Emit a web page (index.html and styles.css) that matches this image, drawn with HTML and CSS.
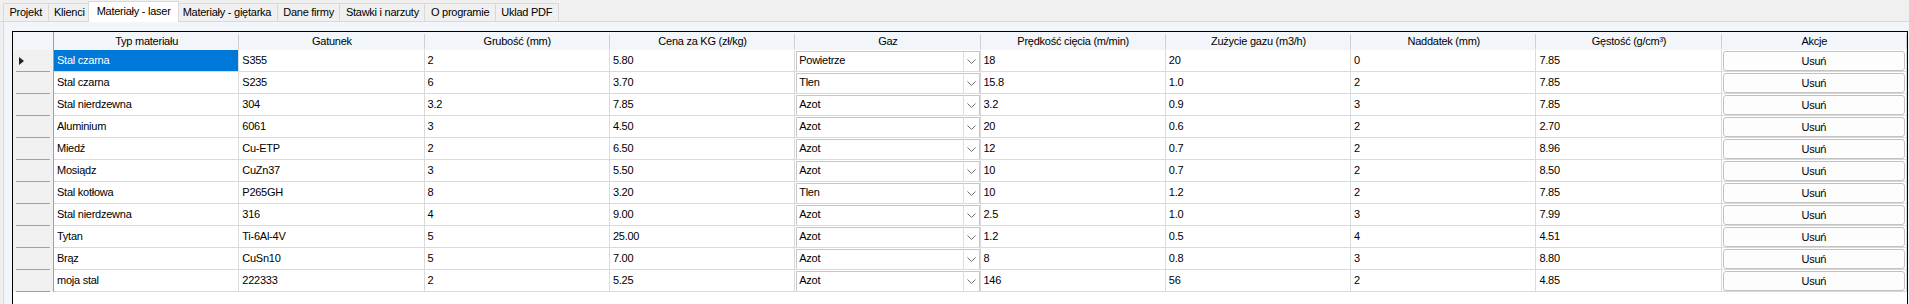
FILE: index.html
```html
<!DOCTYPE html>
<html lang="pl">
<head>
    <meta charset="UTF-8">
    <title>Materiały - laser</title>
    <link rel="stylesheet" href="styles.css">
</head>
<body>
    <div class="tabs">
        <div class="tab">Projekt</div>
        <div class="tab">Klienci</div>
        <div class="tab active">Materiały - laser</div>
        <div class="tab">Materiały - giętarka</div>
        <div class="tab">Dane firmy</div>
        <div class="tab">Stawki i narzuty</div>
        <div class="tab">O programie</div>
        <div class="tab">Uklad PDF</div>
    </div>

    <div class="page">
        <div class="grid" id="grid">
            <div class="grid-row header-row">
                <div class="corner"></div>
                <div class="col-head">Typ materiału</div>
                <div class="col-head">Gatunek</div>
                <div class="col-head">Grubość (mm)</div>
                <div class="col-head">Cena za KG (zł/kg)</div>
                <div class="col-head">Gaz</div>
                <div class="col-head">Prędkość cięcia (m/min)</div>
                <div class="col-head">Zużycie gazu (m3/h)</div>
                <div class="col-head">Naddatek (mm)</div>
                <div class="col-head">Gęstość (g/cm³)</div>
                <div class="col-head">Akcje</div>
            </div>
            <!-- rows are added by the script below -->
        </div>
    </div>

    <script>
        const materials = [
            ['Stal czarna', 'S355', '2', '5.80', 'Powietrze', '18', '20', '0', '7.85'],
            ['Stal czarna', 'S235', '6', '3.70', 'Tlen', '15.8', '1.0', '2', '7.85'],
            ['Stal nierdzewna', '304', '3.2', '7.85', 'Azot', '3.2', '0.9', '3', '7.85'],
            ['Aluminium', '6061', '3', '4.50', 'Azot', '20', '0.6', '2', '2.70'],
            ['Miedź', 'Cu-ETP', '2', '6.50', 'Azot', '12', '0.7', '2', '8.96'],
            ['Mosiądz', 'CuZn37', '3', '5.50', 'Azot', '10', '0.7', '2', '8.50'],
            ['Stal kotłowa', 'P265GH', '8', '3.20', 'Tlen', '10', '1.2', '2', '7.85'],
            ['Stal nierdzewna', '316', '4', '9.00', 'Azot', '2.5', '1.0', '3', '7.99'],
            ['Tytan', 'Ti-6Al-4V', '5', '25.00', 'Azot', '1.2', '0.5', '4', '4.51'],
            ['Brąz', 'CuSn10', '5', '7.00', 'Azot', '8', '0.8', '3', '8.80'],
            ['moja stal', '222333', '2', '5.25', 'Azot', '146', '56', '2', '4.85']
        ];

        const chevron = '<svg width="9" height="5" viewBox="0 0 9 5"><polyline points="0.5,0.5 4.5,4.5 8.5,0.5" fill="none" stroke="#6d6d6d" stroke-width="1"/></svg>';
        const arrow = '<svg width="5" height="8" viewBox="0 0 5 8"><polygon points="0,0 5,4 0,8" fill="#222"/></svg>';

        const grid = document.getElementById('grid');

        materials.forEach((m, i) => {
            const row = document.createElement('div');
            row.className = 'grid-row';
            let html = `<div class="row-head">${i === 0 ? arrow : ''}</div>`;
            m.forEach((value, col) => {
                if (col === 4) {
                    html += `<div class="cell"><div class="combo"><span class="combo-text">${value}</span><span class="combo-btn">${chevron}</span></div></div>`;
                } else {
                    const selected = (i === 0 && col === 0) ? ' selected' : '';
                    html += `<div class="cell${selected}">${value}</div>`;
                }
            });
            html += '<div class="cell"><div class="btn">Usuń</div></div>';
            row.innerHTML = html;
            grid.appendChild(row);
        });
    </script>
</body>
</html>
```

FILE: styles.css
```css
html, body {
    margin: 0;
    height: 100%;
    overflow: hidden;
}
body {
    font-family: "Liberation Sans", Arial, sans-serif;
    font-size: 11px;
    letter-spacing: -0.25px;
    color: #000;
    background: #f0f0f0;
}

/* tab strip */
.tabs {
    display: flex;
    align-items: flex-end;
    height: 22px;
    padding-left: 3px;
    box-sizing: border-box;
    border-bottom: 1px solid #d9d9d9;
}
.tab {
    height: 17px;
    line-height: 17px;
    padding: 0 5.5px;
    border: 1px solid #d9d9d9;
    border-bottom: none;
    border-right: none;
    background: #f0f0f0;
    white-space: nowrap;
}
.tab:last-child {
    border-right: 1px solid #d9d9d9;
}
.tab.active {
    height: 20px;
    line-height: 18px;
    margin: 0 -2px -1px;
    padding: 0 7.5px;
    background: #fff;
    border-right: 1px solid #d9d9d9;
    position: relative;
}
.tab.active + .tab {
    border-left: none;
}

/* tab page */
.page {
    margin-left: 3px;
    height: 100%;
    padding: 9px 1px 0 8px;
    border-left: 1px solid #d9d9d9;
    background: #f2f6fa;
}

/* data grid */
.grid {
    border: 1px solid #000;
    background: #fff;
    height: 320px;
}
.grid-row {
    display: grid;
    grid-template-columns: 41px repeat(10, minmax(0, 1fr));
    height: 22px;
}
.header-row {
    height: 18px;
    background: #f2f6fa;
}
.corner {
    border-right: 1px solid #a0a0a0;
}
.col-head {
    text-align: center;
    line-height: 18px;
    white-space: nowrap;
    overflow: hidden;
    background: linear-gradient(#cfcfcf, #cfcfcf) no-repeat right 0 top 2px / 1px 15px;
}
.row-head {
    border-right: 1px solid #a0a0a0;
    background: linear-gradient(#a0a0a0, #a0a0a0) no-repeat 3px 100% / calc(100% - 6px) 1px, #f0f0f0;
    display: flex;
    align-items: center;
    padding-left: 6px;
}
.cell {
    box-sizing: border-box;
    border-right: 1px solid #dadada;
    border-bottom: 1px solid #dadada;
    padding-left: 3px;
    line-height: 21px;
    white-space: nowrap;
    overflow: hidden;
}
.cell.selected {
    background: #0078d7;
    color: #fff;
}

/* combo box cell */
.combo {
    display: flex;
    height: 19px;
    margin: 1px 0 0 -2px;
    border: 1px solid #c8c8c8;
    border-bottom-color: #a9a9a9;
    background: #fff;
    line-height: 17px;
}
.combo-text {
    flex: 1;
    padding-left: 2px;
}
.combo-btn {
    width: 15px;
    border-left: 1px solid #dedede;
    display: flex;
    align-items: center;
    justify-content: center;
}

/* action button cell */
.btn {
    height: 18px;
    margin: 1px 1px 0 -2px;
    border: 1px solid #c2c2c2;
    border-radius: 3px;
    background: #fdfdfd;
    text-align: center;
    line-height: 18px;
}
```
